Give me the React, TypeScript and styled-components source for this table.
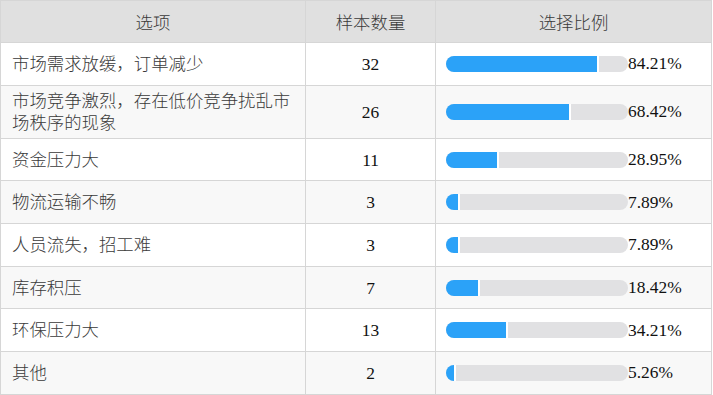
import React from 'react';
import styled, { createGlobalStyle } from 'styled-components';

interface Row {
  label: string;
  count: number;
  percent: number;
}

const rows: Row[] = [
  { label: '市场需求放缓，订单减少', count: 32, percent: 84.21 },
  { label: '市场竞争激烈，存在低价竞争扰乱市场秩序的现象', count: 26, percent: 68.42 },
  { label: '资金压力大', count: 11, percent: 28.95 },
  { label: '物流运输不畅', count: 3, percent: 7.89 },
  { label: '人员流失，招工难', count: 3, percent: 7.89 },
  { label: '库存积压', count: 7, percent: 18.42 },
  { label: '环保压力大', count: 13, percent: 34.21 },
  { label: '其他', count: 2, percent: 5.26 },
];

const GlobalStyle = createGlobalStyle`
  body {
    margin: 0;
    background: #ffffff;
    font-family: "Liberation Serif", "Noto Sans CJK SC", serif;
  }
`;

const Table = styled.table`
  width: 712px;
  border-collapse: collapse;
  table-layout: fixed;
  font-size: 17.4px;
  color: #1a1a1a;
  border: 1px solid #d6d6d6;
`;

const HeadCell = styled.th<{ $width?: number }>`
  width: ${(p) => (p.$width ? `${p.$width}px` : 'auto')};
  height: 42px;
  padding: 0;
  background: #e0e0e0;
  border: 1px solid #d6d6d6;
  font-weight: 300;
  text-align: center;
  color: #3a3a3a;
  box-sizing: border-box;
`;

const BodyRow = styled.tr<{ $striped: boolean }>`
  background: ${(p) => (p.$striped ? '#f8f8f8' : '#ffffff')};
`;

const Cell = styled.td<{ $center?: boolean }>`
  height: 42.7px;
  padding: 4px 11px;
  border: 1px solid #d6d6d6;
  line-height: 22px;
  text-align: ${(p) => (p.$center ? 'center' : 'left')};
  color: ${(p) => (p.$center ? '#111111' : '#3a3a3a')};
  font-weight: ${(p) => (p.$center ? 'normal' : 300)};
  box-sizing: border-box;
`;

const RatioCell = styled.td`
  height: 42.7px;
  padding: 0 10px;
  border: 1px solid #d6d6d6;
  box-sizing: border-box;
`;

const RatioWrap = styled.div`
  display: flex;
  align-items: center;
`;

const Track = styled.div`
  width: 182px;
  height: 16px;
  border-radius: 8px;
  background: #e1e1e3;
  overflow: hidden;
  display: flex;
`;

const Fill = styled.div`
  height: 100%;
  background: #2ba2f8;
  border-right: 2px solid #ffffff;
  box-sizing: border-box;
`;

const Percent = styled.span`
  color: #111111;
  line-height: 1;
`;

export default function App() {
  return (
    <>
      <GlobalStyle />
      <Table>
        <thead>
          <tr>
            <HeadCell $width={305}>选项</HeadCell>
            <HeadCell $width={130}>样本数量</HeadCell>
            <HeadCell>选择比例</HeadCell>
          </tr>
        </thead>
        <tbody>
          {rows.map((row, i) => (
            <BodyRow key={row.label} $striped={i % 2 === 1}>
              <Cell>{row.label}</Cell>
              <Cell $center>{row.count}</Cell>
              <RatioCell>
                <RatioWrap>
                  <Track>
                    <Fill style={{ width: `${row.percent}%` }} />
                  </Track>
                  <Percent>{row.percent.toFixed(2)}%</Percent>
                </RatioWrap>
              </RatioCell>
            </BodyRow>
          ))}
        </tbody>
      </Table>
    </>
  );
}
